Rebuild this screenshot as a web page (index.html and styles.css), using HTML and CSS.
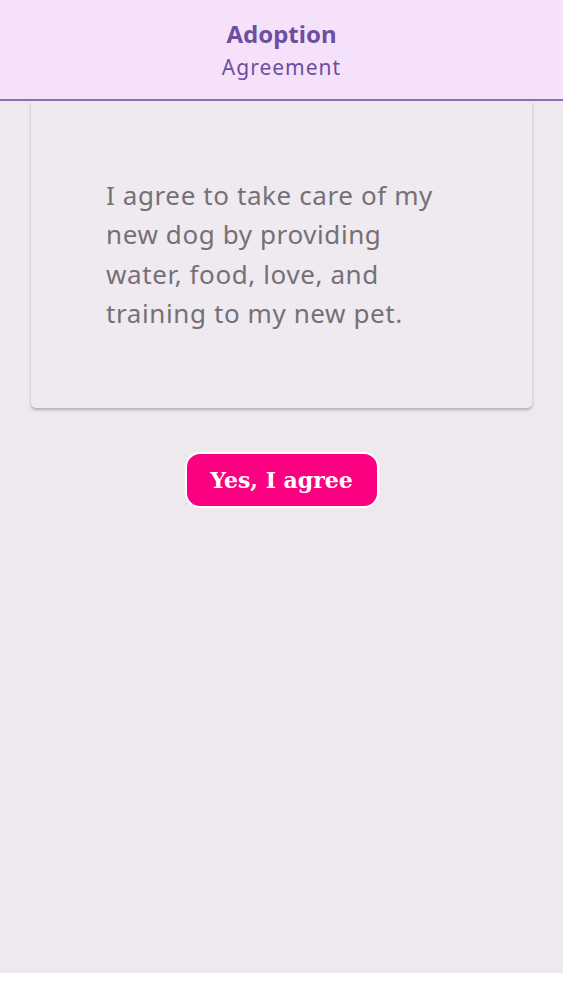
FILE: index.html
```html
<!doctype html>
<html lang="en">
<head>
    <meta charset="UTF-8">
    <title>Adoption Agreement</title>
    <link rel="stylesheet" href="styles.css">
</head>
<body>
<div class="page">
    <div class="header">
        <p class="title">Adoption</p>
        <p class="sub">Agreement</p>
    </div>
    <div class="card">
        <p class="terms">I agree to take care of my new dog by providing water, food, love, and training to my new pet.</p>
    </div>
    <div class="actions">
        <button class="agree">Yes, I agree</button>
    </div>
</div>
</body>
</html>
```

FILE: styles.css
```css
*{margin:0;padding:0;box-sizing:border-box;}
body,html{font-family:"Noto Sans",sans-serif;background:#fff;}
.page{
    height:973px;
    background:#eee8ef;
}
.header{
    height:101px;
    background:#f6e1fb;
    border-bottom:2px solid #8a6fb0;
    display:flex;
    flex-direction:column;
    align-items:center;
    padding-top:18px;
    color:#6c4f9e;
}
.header .title{
    font-size:24px;
    font-weight:bold;
    line-height:32px;
}
.header .sub{
    font-size:21px;
    letter-spacing:1px;
    line-height:35px;
}
.card{
    width:501px;
    height:307px;
    margin:0 31px;
    background:#efeaf0;
    border-radius:0 0 5px 5px;
    box-shadow:0 2px 3px rgba(0,0,0,0.25);
    display:flex;
    align-items:center;
    padding:0 60px 0 75px;
}
.terms{
    max-width:340px;
    font-size:26px;
    line-height:39.5px;
    color:#767076;
    letter-spacing:0.6px;
}
.actions{
    display:flex;
    justify-content:center;
    padding-top:44px;
}
.agree{
    width:194px;
    height:56px;
    background:#fb0080;
    border:2px solid #fff;
    border-radius:15px;
    color:#fff;
    font-family:"DejaVu Serif",serif;
    font-weight:bold;
    font-size:22px;
    cursor:pointer;
}
```
